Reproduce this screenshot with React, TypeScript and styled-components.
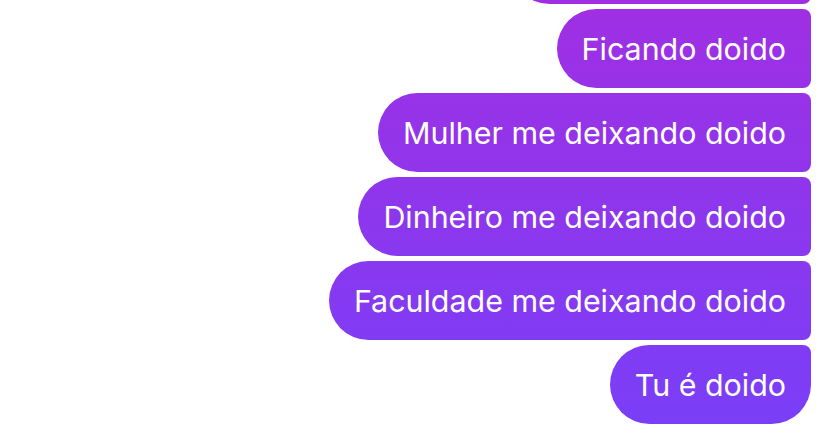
import React from "react";
import styled, { createGlobalStyle } from "styled-components";

const GlobalStyle = createGlobalStyle`
  html, body {
    margin: 0;
    padding: 0;
    background: #ffffff;
  }
  body {
    font-family: Inter, "Noto Sans", sans-serif;
  }
`;

const Thread = styled.div`
  display: flex;
  flex-direction: column;
  align-items: flex-end;
  justify-content: flex-end;
  gap: 5px;
  height: 439px;
  overflow: hidden;
  padding: 0 17px 15px 0;
  box-sizing: border-box;
`;

const Bubble = styled.div<{ $last?: boolean; $width?: number }>`
  flex-shrink: 0;
  display: flex;
  align-items: center;
  height: 79px;
  width: ${(p) => (p.$width ? `${p.$width}px` : "auto")};
  padding: 0 25px;
  box-sizing: border-box;
  border-radius: ${(p) => (p.$last ? "40px 8px 40px 40px" : "40px 8px 8px 40px")};
  background: linear-gradient(180deg, #a02fe3 0%, #783ff8 100%);
  background-attachment: fixed;
  color: #ffffff;
  font-size: 30.4px;
  white-space: nowrap;
`;

const messages = [
  "Ficando doido",
  "Mulher me deixando doido",
  "Dinheiro me deixando doido",
  "Faculdade me deixando doido",
  "Tu é doido",
];

export default function App() {
  return (
    <>
      <GlobalStyle />
      <Thread>
        {/* earlier message, scrolled mostly out of view */}
        <Bubble $width={301} />
        {messages.map((m, i) => (
          <Bubble key={i} $last={i === messages.length - 1}>
            {m}
          </Bubble>
        ))}
      </Thread>
    </>
  );
}
